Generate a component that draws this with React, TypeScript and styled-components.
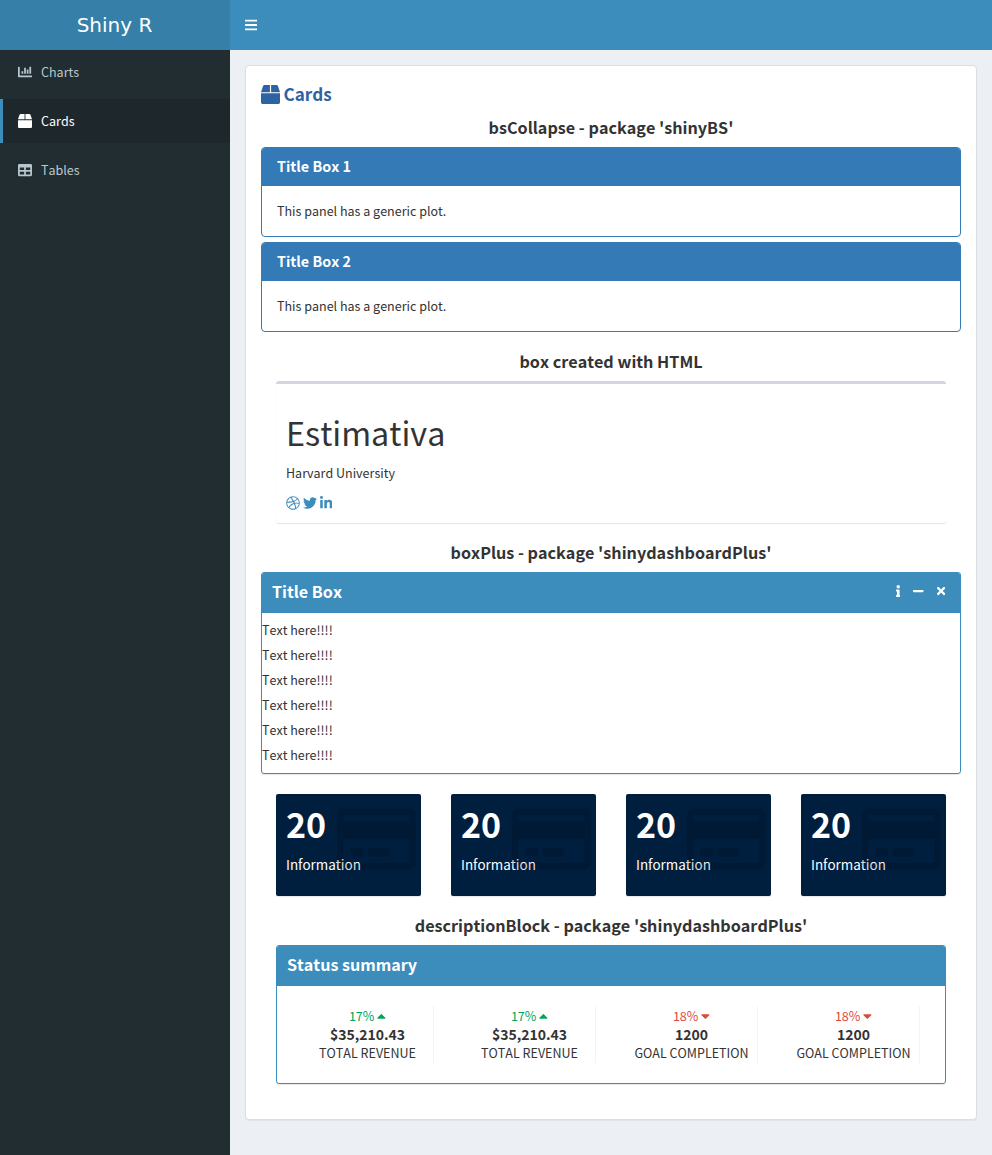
import React from 'react';
import styled, { createGlobalStyle } from 'styled-components';
import {
  FaBars, FaBox, FaCaretDown, FaCaretUp, FaChartBar, FaDribbble, FaInfo, FaLinkedinIn,
  FaMinus, FaRegCreditCard, FaTable, FaTimes, FaTwitter,
} from 'react-icons/fa';

const GlobalStyle = createGlobalStyle`
  * { box-sizing: border-box; }
  body {
    margin: 0;
    background: #ecf0f5;
    color: #333;
    font-family: 'Noto Sans CJK JP', 'Noto Sans', sans-serif;
    font-size: 12.53px;
    font-kerning: none;
    line-height: 20px;
  }
  h1, h3, h4, p { margin: 0; }
  svg { display: block; flex: none; }
`;

const BarsIcon = styled(FaBars)`width: 0.875em;`;
const LinkedinIcon = styled(FaLinkedinIn)`width: 0.875em;`;
const InfoMark = styled(FaInfo)`width: 0.375em;`;
const MinusIcon = styled(FaMinus)`width: 0.875em;`;
const CloseIcon = styled(FaTimes)`width: 0.6875em;`;
const UpIcon = styled(FaCaretUp)`width: 0.625em;`;
const DownIcon = styled(FaCaretDown)`width: 0.625em;`;
const CardIcon = styled(FaRegCreditCard)`width: 1.125em;`;

const Page = styled.div`
  display: grid;
  grid-template-columns: 230px 1fr;
  grid-template-rows: 50px 1fr;
  height: 1155px;
`;

const Logo = styled.div`
  padding-right: 1px;
  background: #367fa9;
  color: #fff;
  font: 20px/50px 'DejaVu Sans', sans-serif;
  text-align: center;
`;

const Navbar = styled.header`
  display: flex;
  align-items: center;
  padding-left: 15px;
  background: #3c8dbc;
  color: #fff;
  font-size: 14px;
`;

const Sidebar = styled.nav`
  display: flex;
  flex-direction: column;
  gap: 5px;
  background: #222d32;
`;

const NavItem = styled.a<{ $active?: boolean }>`
  display: flex;
  align-items: center;
  height: 44px;
  padding-left: 15px;
  border-left: 3px solid ${(p) => (p.$active ? '#3c8dbc' : 'transparent')};
  background: ${(p) => (p.$active ? '#1e282c' : 'transparent')};
  color: ${(p) => (p.$active ? '#fff' : '#b8c7ce')};
`;

const NavIcon = styled.span`
  width: 23px;
  font-size: 14px;
`;

const Content = styled.main`
  padding: 15px;
`;

const Panel = styled.section`
  height: 1055px;
  padding: 15px;
  border: 1px solid #ddd;
  border-radius: 4px;
  background: #fff;
  box-shadow: 0 1px 1px rgba(0, 0, 0, 0.05);
`;

const PageTitle = styled.h3`
  display: flex;
  align-items: center;
  gap: 3.5px;
  height: 26px;
  color: #2e63a3;
  font-size: 17.1px;
  font-weight: 700;

  svg { width: 19px; height: 19px; margin-top: 1px; }
`;

const SectionTitle = styled.h4<{ $top: number }>`
  height: 20px;
  margin-top: ${(p) => p.$top}px;
  font-size: 16.16px;
  font-weight: 700;
  text-align: center;
`;

const Collapse = styled.div`
  display: flex;
  flex-direction: column;
  gap: 5px;
  margin-top: 10px;
`;

const CollapseItem = styled.div`
  height: 90px;
  overflow: hidden;
  border: 1px solid #337ab7;
  border-radius: 4px;
`;

const CollapseHeading = styled.div`
  height: 38px;
  padding: 0 15px;
  background: #337ab7;
  color: #fff;
  font-size: 14.33px;
  font-weight: 700;
  line-height: 36px;
`;

const CollapseBody = styled.div`
  padding: 15px;
`;

const ProfileBox = styled.div`
  height: 142px;
  margin: 10px 15px 0;
  padding: 28px 10px 0;
  border-top: 3px solid #d2d6de;
  border-radius: 3px;
  box-shadow: 0 1px 1px rgba(0, 0, 0, 0.1);
`;

const ProfileName = styled.h1`
  font-size: 32.3px;
  font-weight: 400;
  line-height: 40px;
`;

const ProfileText = styled.p`
  margin-top: 11px;
`;

const SocialLinks = styled.div`
  display: flex;
  align-items: center;
  gap: 3px;
  height: 20px;
  margin-top: 10px;
  color: #3c8dbc;
  font-size: 14px;
`;

const SolidBox = styled.div<{ $height: number; $inset?: number }>`
  height: ${(p) => p.$height}px;
  margin: 10px ${(p) => p.$inset ?? 0}px 0;
  overflow: hidden;
  border: 1px solid #3c8dbc;
  border-radius: 3px;
  box-shadow: 0 1px 1px rgba(0, 0, 0, 0.1);
`;

const SolidHeader = styled.div`
  display: flex;
  justify-content: space-between;
  height: 40px;
  padding: 0 15px 0 10px;
  background: #3c8dbc;
  color: #fff;
  font-size: 16.13px;
  font-weight: 700;
  line-height: 36px;
`;

const BoxTools = styled.div`
  display: flex;
  align-items: center;
  height: 35px;
  gap: 13px;
  font-size: 12px;
`;

const TextLines = styled.div`
  padding-top: 7px;

  p { height: 25px; }
`;

const InfoGrid = styled.div`
  display: grid;
  grid-template-columns: repeat(4, 145px);
  gap: 30px;
  margin: 20px 15px 0;
`;

const InfoBox = styled.div`
  position: relative;
  height: 102px;
  padding: 9px 10px;
  border-radius: 2px;
  background: #001f3f;
  color: #fff;
  box-shadow: 0 1px 1px rgba(0, 0, 0, 0.1);
`;

const InfoValue = styled.div`
  font-size: 34px;
  font-weight: 700;
  line-height: 42px;
`;

const InfoLabel = styled.div`
  margin-top: 9px;
  font-size: 13.43px;
`;

const InfoIcon = styled.div`
  position: absolute;
  top: 10px;
  right: 5px;
  color: rgba(0, 0, 0, 0.15);
  font-size: 70px;
`;

const StatusGrid = styled.div`
  display: grid;
  grid-template-columns: repeat(4, 1fr);
  padding: 20px 10px 0;
`;

const StatusBlock = styled.div`
  height: 57px;
  margin: 0 15px;
  border-right: 1px solid #f4f4f4;
  text-align: center;
  white-space: nowrap;
`;

const Change = styled.div<{ $up: boolean }>`
  display: flex;
  align-items: center;
  justify-content: center;
  gap: 3px;
  height: 20px;
  color: ${(p) => (p.$up ? '#00a65a' : '#dd4b39')};

  svg { font-size: 14px; }
`;

const Amount = styled.div`
  height: 18px;
  font-size: 14px;
  font-weight: 600;
  line-height: 16px;
`;

const Caption = styled.div`
  display: flex;
  justify-content: center;
  line-height: 17px;
`;

const statuses = [
  { up: true, change: '17%', amount: '$35,210.43', caption: 'TOTAL REVENUE' },
  { up: true, change: '17%', amount: '$35,210.43', caption: 'TOTAL REVENUE' },
  { up: false, change: '18%', amount: '1200', caption: 'GOAL COMPLETION' },
  { up: false, change: '18%', amount: '1200', caption: 'GOAL COMPLETION' },
];

export default function App() {
  return (
    <>
      <GlobalStyle />
      <Page>
        <Logo>Shiny R</Logo>
        <Navbar><BarsIcon /></Navbar>
        <Sidebar>
          <NavItem><NavIcon><FaChartBar /></NavIcon>Charts</NavItem>
          <NavItem $active><NavIcon><FaBox /></NavIcon>Cards</NavItem>
          <NavItem><NavIcon><FaTable /></NavIcon>Tables</NavItem>
        </Sidebar>
        <Content>
          <Panel>
            <PageTitle><FaBox />Cards</PageTitle>
            <SectionTitle $top={10}>bsCollapse - package 'shinyBS'</SectionTitle>
            <Collapse>
              {['Title Box 1', 'Title Box 2'].map((title) => (
                <CollapseItem key={title}>
                  <CollapseHeading>{title}</CollapseHeading>
                  <CollapseBody>This panel has a generic plot.</CollapseBody>
                </CollapseItem>
              ))}
            </Collapse>

            <SectionTitle $top={19}>box created with HTML</SectionTitle>
            <ProfileBox>
              <ProfileName>Estimativa</ProfileName>
              <ProfileText>Harvard University</ProfileText>
              <SocialLinks><FaDribbble /><FaTwitter /><LinkedinIcon /></SocialLinks>
            </ProfileBox>

            <SectionTitle $top={19}>boxPlus - package 'shinydashboardPlus'</SectionTitle>
            <SolidBox $height={202}>
              <SolidHeader>
                Title Box
                <BoxTools><InfoMark /><MinusIcon /><CloseIcon /></BoxTools>
              </SolidHeader>
              <TextLines>
                {Array.from({ length: 6 }, (_, i) => <p key={i}>Text here!!!!</p>)}
              </TextLines>
            </SolidBox>

            <InfoGrid>
              {Array.from({ length: 4 }, (_, i) => (
                <InfoBox key={i}>
                  <InfoValue>20</InfoValue>
                  <InfoLabel>Information</InfoLabel>
                  <InfoIcon><CardIcon /></InfoIcon>
                </InfoBox>
              ))}
            </InfoGrid>

            <SectionTitle $top={19}>descriptionBlock - package 'shinydashboardPlus'</SectionTitle>
            <SolidBox $height={139} $inset={15}>
              <SolidHeader>Status summary</SolidHeader>
              <StatusGrid>
                {statuses.map((s, i) => (
                  <StatusBlock key={i}>
                    <Change $up={s.up}>{s.change}{s.up ? <UpIcon /> : <DownIcon />}</Change>
                    <Amount>{s.amount}</Amount>
                    <Caption>{s.caption}</Caption>
                  </StatusBlock>
                ))}
              </StatusGrid>
            </SolidBox>
          </Panel>
        </Content>
      </Page>
    </>
  );
}
